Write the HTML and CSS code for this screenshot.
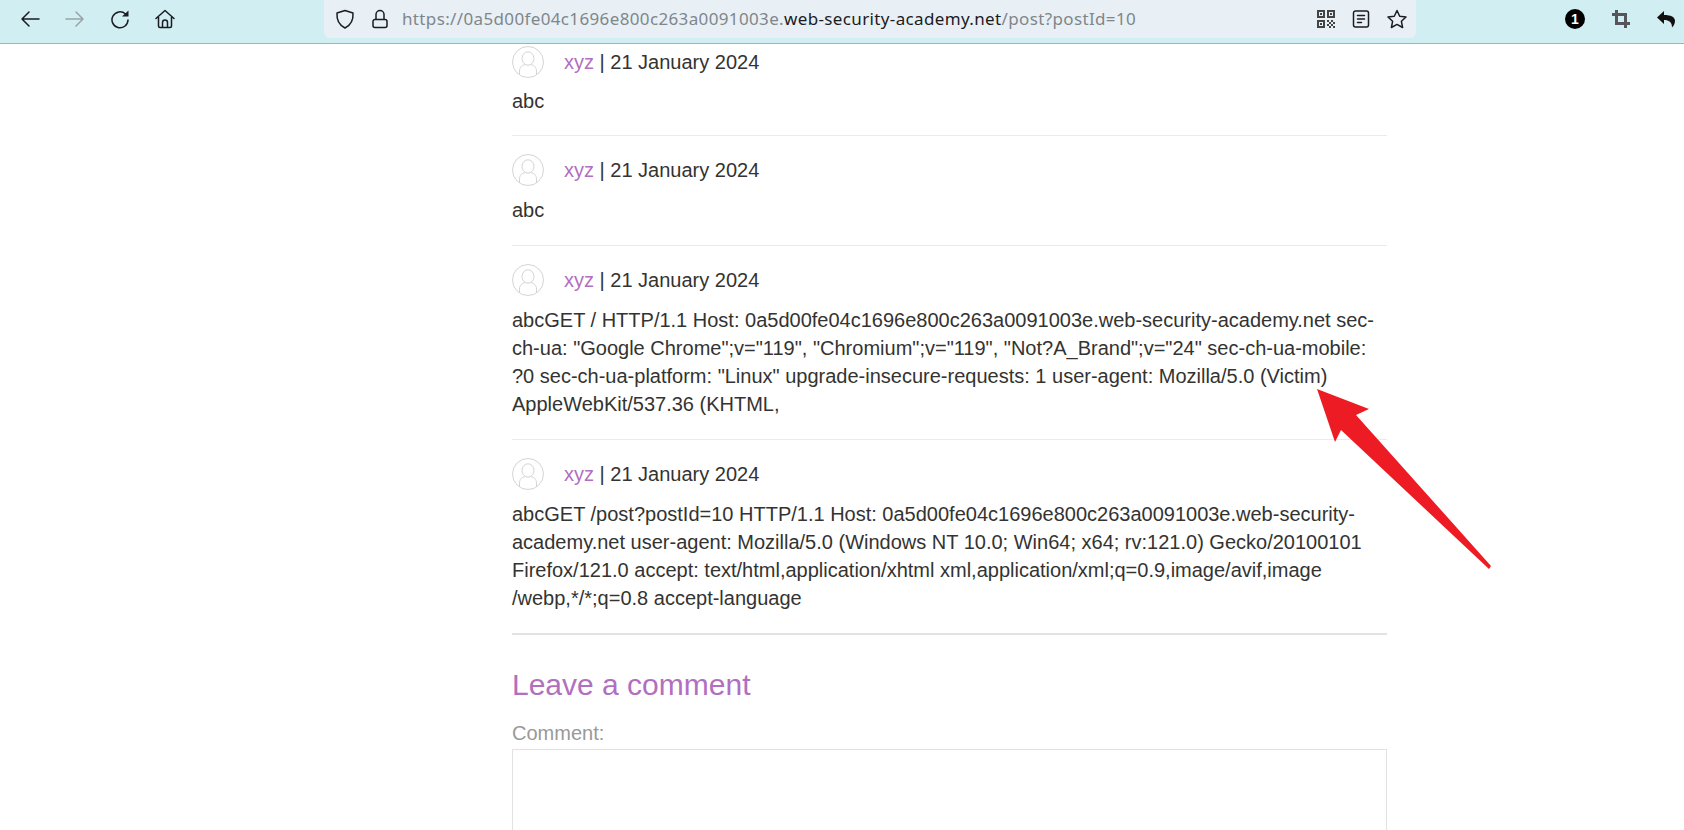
FILE: index.html
```html
<!DOCTYPE html>
<html lang="en">
<head>
    <meta charset="UTF-8">
    <title>Post comments</title>
    <link rel="stylesheet" href="styles.css">
</head>
<body>
    <header class="toolbar">
        <div class="nav-btns">
            <svg class="icon" viewBox="0 0 20 20"><path d="M19 10H2M9 3l-7 7 7 7"/></svg>
            <svg class="icon disabled" viewBox="0 0 20 20"><path d="M1 10H18M11 3l7 7-7 7"/></svg>
            <svg class="icon" viewBox="0 0 20 20"><path d="M15.500 5A8 8 0 1 0 18 11"/><path class="solid" d="M12 7.500L18.500 1.500V7.500Z"/></svg>
            <svg class="icon" viewBox="0 0 20 20"><path d="M1 9.500L10 1.500 19 9.500M3.500 8v9a1.500 1.500 0 0 0 1.500 1.500h10a1.500 1.500 0 0 0 1.500-1.500V8M7.500 18.500v-5a2.500 2.500 0 0 1 5 0v5"/></svg>
        </div>
        <div class="urlbar">
            <svg class="icon" viewBox="0 0 20 20"><path d="M10 1.500l8 2.500c.5 7-2 12-8 15C4 16 1.500 11 2 4z"/></svg>
            <svg class="icon" viewBox="0 0 20 20"><path d="M5 10.500h10a2 2 0 0 1 2 2v4a2 2 0 0 1-2 2H5a2 2 0 0 1-2-2v-4a2 2 0 0 1 2-2zM6 10.500V5.500a4 4 0 0 1 8 0v5"/></svg>
            <div class="url">https://0a5d00fe04c1696e800c263a0091003e.<span class="domain">web-security-academy.net</span>/post?postId=10</div>
            <div class="url-actions">
                <svg class="icon-qr" viewBox="0 0 18 18"><path d="M0 0h8v8H0zM2 2v4h4V2zM10 0h8v8h-8zM12 2v4h4V2zM0 10h8v8H0zM2 12v4h4v-4zM3 3h2v2H3zM13 3h2v2h-2zM3 13h2v2H3zM10 10h2v2h-2zM14 10h2v2h-2zM12 12h2v2h-2zM16 12h2v2h-2zM10 14h2v2h-2zM14 14h2v2h-2zM12 16h2v2h-2zM16 16h2v2h-2z"/></svg>
                <svg class="icon" viewBox="0 0 20 20"><path d="M4.500 2h11a2 2 0 0 1 2 2v12a2 2 0 0 1-2 2h-11a2 2 0 0 1-2-2V4a2 2 0 0 1 2-2zM6.500 6.500h7M6.500 10h7M6.500 13.500h4"/></svg>
                <svg class="icon" viewBox="0 0 20 20"><path d="M10 1.500l2.700 5.700 6.300.8-4.600 4.300 1.200 6.200L10 15.400l-5.600 3.100 1.200-6.200L1 8l6.300-.8z"/></svg>
            </div>
        </div>
        <div class="ext-btns">
            <div class="badge">1</div>
            <svg class="icon-crop" viewBox="0 0 18 18"><path d="M0 4.500h13.500V18M4.500 0v13.500H18"/></svg>
            <svg class="icon-undo" viewBox="0 0 18 18"><path d="M7 1L0 7.500 7 14V10c5 0 8 2 8 7.500 2-2 3-4.500 3-6.500 0-4-4-6-11-6z"/></svg>
        </div>
    </header>

    <main class="page">
        <section class="comment first">
            <div class="comment-meta">
                <svg class="avatar" viewBox="0 0 32 32"><circle cx="16" cy="16" r="15.500"/><ellipse cx="16" cy="12.500" rx="6" ry="6.700"/><path d="M7.500 29v-4c0-4 3-6 6-6.500M24.500 29v-4c0-4-3-6-6-6.500"/></svg>
                <span><span class="author">xyz</span> | 21 January 2024</span>
            </div>
            <p>abc</p>
        </section>
        <section class="comment">
            <div class="comment-meta">
                <svg class="avatar" viewBox="0 0 32 32"><circle cx="16" cy="16" r="15.500"/><ellipse cx="16" cy="12.500" rx="6" ry="6.700"/><path d="M7.500 29v-4c0-4 3-6 6-6.500M24.500 29v-4c0-4-3-6-6-6.500"/></svg>
                <span><span class="author">xyz</span> | 21 January 2024</span>
            </div>
            <p>abc</p>
        </section>
        <section class="comment">
            <div class="comment-meta">
                <svg class="avatar" viewBox="0 0 32 32"><circle cx="16" cy="16" r="15.500"/><ellipse cx="16" cy="12.500" rx="6" ry="6.700"/><path d="M7.500 29v-4c0-4 3-6 6-6.500M24.500 29v-4c0-4-3-6-6-6.500"/></svg>
                <span><span class="author">xyz</span> | 21 January 2024</span>
            </div>
            <p>abcGET / HTTP/1.1 Host: 0a5d00fe04c1696e800c263a0091003e.web-security-academy.net sec-ch-ua: "Google Chrome";v="119", "Chromium";v="119", "Not?A_Brand";v="24" sec-ch-ua-mobile:<br>?0 sec-ch-ua-platform: "Linux" upgrade-insecure-requests: 1 user-agent: Mozilla/5.0 (Victim) AppleWebKit/537.36 (KHTML,</p>
        </section>
        <section class="comment last">
            <div class="comment-meta">
                <svg class="avatar" viewBox="0 0 32 32"><circle cx="16" cy="16" r="15.500"/><ellipse cx="16" cy="12.500" rx="6" ry="6.700"/><path d="M7.500 29v-4c0-4 3-6 6-6.500M24.500 29v-4c0-4-3-6-6-6.500"/></svg>
                <span><span class="author">xyz</span> | 21 January 2024</span>
            </div>
            <p>abcGET /post?postId=10 HTTP/1.1 Host: 0a5d00fe04c1696e800c263a0091003e.web-security-academy.net user-agent: Mozilla/5.0 (Windows NT 10.0; Win64; x64; rv:121.0) Gecko/20100101 Firefox/121.0 accept: text/html,application/xhtml xml,application/xml;q=0.9,image/avif,image<br>/webp,*/*;q=0.8 accept-language</p>
        </section>

        <h2>Leave a comment</h2>
        <label class="field-label" for="comment">Comment:</label>
        <div class="comment-box" id="comment"></div>
    </main>

    <svg class="arrow" viewBox="0 0 1684 830"><path d="M1317 389L1369 409 1356 415 1491 566 1489 569 1341 430 1335 442Z"/></svg>
</body>
</html>
```

FILE: styles.css
```css
html, body {
    margin: 0;
    height: 830px;
    overflow: hidden;
}
body {
    background: #fff;
    font-family: "Liberation Sans", Arial, sans-serif;
    color: #333332;
    font-size: 20px;
    line-height: 28px;
}

/* browser chrome */
.toolbar {
    height: 43px;
    background: #d1eef2;
    border-bottom: 1px solid #9fb4b8;
    display: flex;
    align-items: flex-start;
}
.nav-btns {
    width: 324px;
    height: 38px;
    padding-left: 20px;
    box-sizing: border-box;
    display: flex;
    align-items: center;
    gap: 25px;
}
.icon {
    width: 20px;
    height: 20px;
    flex: none;
    fill: none;
    stroke: #1c1b22;
    stroke-width: 1.500;
    stroke-linejoin: round;
    stroke-linecap: round;
}
.icon.disabled {
    stroke: #9aa3a6;
}
.icon .solid {
    fill: #1c1b22;
    stroke: none;
}
.urlbar {
    width: 1092px;
    height: 38px;
    background: #e8f0f6;
    border-radius: 0 0 6px 6px;
    display: flex;
    align-items: center;
    padding: 0 9px 0 11px;
    box-sizing: border-box;
    gap: 15px;
}
.url {
    flex: 1;
    margin-left: -3px;
    font-family: "Noto Sans", sans-serif;
    font-size: 17px;
    letter-spacing: 0.36px;
    line-height: 22px;
    color: #80868a;
    white-space: nowrap;
}
.domain {
    color: #1c1b22;
}
.url-actions {
    display: flex;
    align-items: center;
    gap: 16px;
}
.icon-qr {
    width: 18px;
    height: 18px;
    fill: #444;
}
.ext-btns {
    flex: 1;
    height: 38px;
    display: flex;
    align-items: center;
    padding-left: 149px;
    gap: 27px;
}
.badge {
    width: 20px;
    height: 20px;
    border-radius: 50%;
    background: #000;
    color: #fff;
    font-size: 14px;
    font-weight: bold;
    line-height: 20px;
    text-align: center;
}
.icon-crop {
    width: 18px;
    height: 18px;
    fill: none;
    stroke: #55555c;
    stroke-width: 3;
}
.icon-undo {
    width: 18px;
    height: 18px;
    fill: #111;
}

/* page content */
.page {
    width: 875px;
    margin-left: 512px;
}
.comment {
    padding-top: 18px;
    border-bottom: 1px solid #e8ebee;
}
.comment.first {
    padding-top: 2px;
}
.comment.last {
    border-bottom: 2px solid #e2e2e2;
}
.comment-meta {
    display: flex;
    align-items: center;
    gap: 20px;
    height: 32px;
}
.avatar {
    width: 32px;
    height: 32px;
    fill: none;
    stroke: #d4d4d4;
    stroke-width: 1;
}
.author {
    color: #b26fc0;
}
.comment p {
    margin: 10px 0 21px;
}
.comment.first p {
    margin: 9px 0 20px;
}
h2 {
    margin: 32px 0 0;
    font-size: 30px;
    line-height: 36px;
    font-weight: normal;
    color: #b26fc0;
}
.field-label {
    display: block;
    margin-top: 18px;
    color: #999;
    font-size: 20px;
    line-height: 24px;
}
.comment-box {
    height: 200px;
    margin-top: 4px;
    border: 1px solid #e2e2e2;
}

/* annotation drawn over the page */
.arrow {
    position: absolute;
    left: 0;
    top: 0;
    width: 1684px;
    height: 830px;
    fill: #ed1c24;
}
```
